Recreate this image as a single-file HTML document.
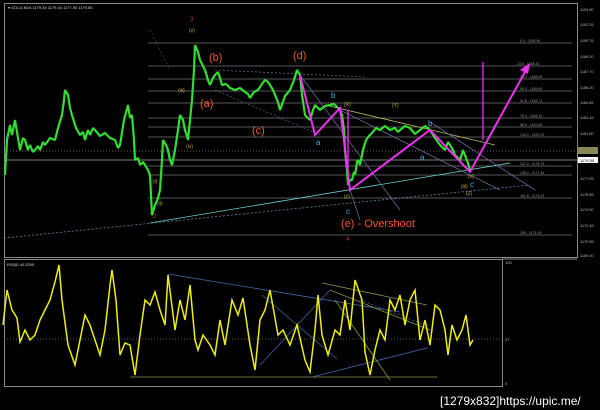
<!DOCTYPE html>
<html><head><meta charset="utf-8"><style>
html,body{margin:0;padding:0;background:#000;width:600px;height:410px;overflow:hidden}
svg{display:block}
text{font-family:"Liberation Sans",sans-serif}
</style></head><body>
<svg width="600" height="410" viewBox="0 0 600 410">
<rect width="600" height="410" fill="#000"/>
<rect x="4.5" y="3.5" width="573" height="254" fill="none" stroke="#888" stroke-width="1"/>
<rect x="4.5" y="259.5" width="498" height="127" fill="none" stroke="#888" stroke-width="1"/>
<line x1="502" y1="259" x2="577" y2="259" stroke="#888"/>
<text x="8" y="9" font-size="4" fill="#ddd">▾ GOLD,M15  1179.34 1179.44 1177.95 1179.55</text>
<g stroke="#777" stroke-width="0.7">
<line x1="148" y1="43" x2="572" y2="43"/><line x1="148" y1="66" x2="572" y2="66"/>
<line x1="148" y1="79" x2="572" y2="79"/><line x1="148" y1="91" x2="572" y2="91"/>
<line x1="148" y1="103" x2="572" y2="103"/><line x1="148" y1="118" x2="572" y2="118"/>
<line x1="148" y1="127" x2="572" y2="127"/><line x1="148" y1="137" x2="572" y2="137"/>
<line x1="148" y1="166" x2="572" y2="166"/><line x1="148" y1="175" x2="572" y2="175"/>
<line x1="148" y1="198" x2="572" y2="198"/><line x1="148" y1="235" x2="572" y2="235"/>
<line x1="4" y1="160" x2="577" y2="160" stroke="#aaa"/>
</g>
<line x1="4" y1="151" x2="577" y2="151" stroke="#887" stroke-dasharray="1,2" stroke-width="0.7"/>
<g font-size="3.5" fill="#999">
<text x="520" y="42">0.0 - 1190.90</text><text x="517" y="65">23.6 - 1188.33</text>
<text x="520" y="78">38.2 - 1186.95</text><text x="520" y="90">50.0 - 1185.65</text>
<text x="520" y="102">61.8 - 1184.71</text><text x="520" y="117">76.4 - 1183.12</text>
<text x="520" y="126">88.6 - 1181.86</text><text x="520" y="136">100.0 - 1181.00</text>
<text x="520" y="165">127.2 - 1178.76</text><text x="520" y="174">138.2 - 1177.46</text>
<text x="520" y="197">161.8 - 1175.23</text><text x="520" y="234">200 - 1171.00</text>
</g>
<g stroke-width="0.8" fill="none">
<line x1="150" y1="223" x2="510" y2="163" stroke="#6cc"/>
<line x1="4" y1="238" x2="530" y2="185" stroke="#58a" stroke-dasharray="2,2"/>
<line x1="215" y1="70" x2="365" y2="77" stroke="#668" stroke-dasharray="2,2"/>
<line x1="215" y1="90" x2="320" y2="135" stroke="#558" stroke-dasharray="2,2"/>
<line x1="325" y1="105" x2="495" y2="145" stroke="#bb6"/>
<line x1="300" y1="75" x2="400" y2="210" stroke="#669"/>
<line x1="340" y1="110" x2="500" y2="190" stroke="#669"/>
<line x1="350" y1="190" x2="360" y2="220" stroke="#669"/>
<line x1="430" y1="122" x2="535" y2="190" stroke="#669"/>
<line x1="150" y1="30" x2="170" y2="70" stroke="#444" stroke-dasharray="2,2"/>
</g>
<polyline fill="none" stroke="#3d3" stroke-width="2.2" stroke-linejoin="bevel" points="5,175 7,140 10,125 12,135 15,120 17,132 20,150 23,138 25,140 28,150 30,145 33,152 35,150 38,146 40,150 43,142 45,145 50,138 55,140 58,128 62,115 64,100 65,90 68,95 70,108 72,115 76,128 80,135 83,132 85,140 88,130 90,135 93,128 95,130 100,136 105,133 110,138 115,140 118,148 120,145 124,120 128,105 130,118 132,115 134,140 135,160 138,158 140,165 143,162 145,165 148,170 150,175 152,215 155,205 158,198 160,190 162,160 163,140 166,145 168,150 170,160 172,165 174,155 175,150 178,130 180,115 183,120 185,130 187,136 188,140 190,120 192,100 194,70 195,45 198,52 200,60 203,66 205,70 208,80 210,85 213,78 215,75 218,72 220,78 222,85 226,84 230,88 235,90 240,88 245,92 248,94 250,98 254,92 258,90 262,84 265,80 268,82 270,85 273,90 275,95 278,102 280,110 285,96 290,90 294,80 297,70 300,75 302,95 305,115 308,118 310,120 313,110 315,105 318,108 320,110 325,106 330,105 334,104 337,107 340,110 342,115 344,130 345,150 347,170 348,185 350,180 352,180 354,172 355,175 357,162 358,160 360,165 363,150 366,140 369,136 372,133 376,128 380,130 385,126 390,130 395,128 398,132 400,130 405,126 410,128 415,134 420,130 425,126 430,130 435,138 440,145 443,148 445,150 448,142 450,145 453,150 455,155 458,158 460,160 462,154 463,150 466,158 468,163 470,170"/>
<g stroke="#e3e" stroke-width="2" fill="none">
<polyline points="300,75 315,135 340,108 350,190 430,130 470,172 526,70"/>
<line x1="483" y1="62" x2="483" y2="140" stroke-width="1.3"/>
<line x1="348" y1="110" x2="348" y2="185" stroke-width="1.3"/>
</g>
<polygon points="530,63 520,70 528,74" fill="#e3e"/>
<g font-size="11" fill="#e53">
<text x="209" y="61">(b)</text><text x="293" y="59">(d)</text>
<text x="200" y="107">(a)</text><text x="252" y="134">(c)</text>
<text x="341" y="227">(e) - Overshoot</text>
</g>
<g font-size="8" fill="#4ad">
<text x="331" y="98">b</text><text x="316" y="145">a</text><text x="346" y="214">c</text>
<text x="428" y="126">b</text><text x="420" y="160">a</text><text x="470" y="187">c</text>
</g>
<g font-size="5" fill="#ca3">
<text x="189" y="32">(v)</text><text x="178" y="92">(iii)</text><text x="186" y="148">(iv)</text>
<text x="153" y="183">(i)</text><text x="157" y="205">(ii)</text><text x="392" y="107">(Y)</text>
<text x="344" y="106">(X)</text><text x="344" y="198">(z)</text><text x="466" y="195">(Z)</text>
<text x="461" y="188">(iii)</text><text x="468" y="178">(v)</text>
</g>
<text x="190" y="21" font-size="6" fill="#c33">3</text>
<text x="153" y="218" font-size="6" fill="#c33">2</text>
<text x="346" y="241" font-size="6" fill="#c33">4</text>
<g font-size="3.8" fill="#bbb">
<text x="580" y="11">1193.80</text><text x="580" y="26">1192.25</text><text x="580" y="42">1190.75</text>
<text x="580" y="58">1189.20</text><text x="580" y="73">1187.70</text><text x="580" y="89">1186.20</text>
<text x="580" y="104">1184.65</text><text x="580" y="119">1183.15</text><text x="580" y="135">1181.60</text>
<text x="580" y="180">1177.05</text><text x="580" y="196">1175.55</text><text x="580" y="211">1174.00</text>
<text x="580" y="227">1172.45</text><text x="580" y="243">1170.95</text><text x="580" y="257">1169.40</text>
</g>
<rect x="578" y="147" width="20" height="7" fill="#885"/>
<rect x="578" y="157" width="20" height="6" fill="#fff"/>
<text x="580" y="162" font-size="4" fill="#000">1179.55</text>
<text x="7" y="266" font-size="4" fill="#ddd">RSI(5) 40.3295</text>
<line x1="4" y1="339" x2="502" y2="339" stroke="#777" stroke-dasharray="1,2" stroke-width="0.7"/>
<g font-size="4" fill="#bbb"><text x="505" y="264">100</text><text x="505" y="341">37</text><text x="505" y="385">0</text></g>
<g stroke-width="0.8" fill="none">
<line x1="168" y1="274" x2="400" y2="312" stroke="#46a"/>
<line x1="130" y1="377" x2="437" y2="377" stroke="#894"/>
<line x1="312" y1="377" x2="427" y2="348" stroke="#46a"/>
<line x1="322" y1="283" x2="427" y2="305" stroke="#894"/>
<line x1="330" y1="290" x2="430" y2="330" stroke="#894"/>
<line x1="335" y1="300" x2="390" y2="380" stroke="#894"/>
<line x1="262" y1="295" x2="337" y2="359" stroke="#46a"/>
<line x1="260" y1="365" x2="330" y2="290" stroke="#46a"/>
<line x1="360" y1="300" x2="428" y2="326" stroke="#46a" stroke-dasharray="2,2"/>
</g>
<polyline fill="none" stroke="#ee1" stroke-width="1.5" points="3,325 7,290 12,310 17,318 20,342 25,330 30,340 35,335 40,320 45,310 50,300 55,282 59,265 62,300 68,345 75,365 80,340 85,315 90,325 95,340 100,355 105,330 110,285 112,270 116,300 120,355 125,343 130,345 135,375 140,335 145,300 150,305 155,292 160,310 165,325 168,275 175,330 180,300 185,320 190,285 195,340 198,350 203,335 210,345 215,355 220,320 225,345 232,300 238,315 243,298 250,345 255,370 260,320 265,310 270,290 278,335 283,330 290,345 297,325 305,360 310,372 315,330 318,295 322,335 328,355 335,330 340,335 345,300 350,330 355,280 362,300 365,352 370,375 375,350 380,330 385,340 390,300 395,310 400,295 405,325 410,300 415,290 420,340 425,320 430,345 435,305 440,310 445,330 448,355 452,325 457,340 462,330 466,315 470,345 473,340"/>
<text x="440" y="405" font-size="12" fill="#fff" font-family="Liberation Mono,monospace">[1279x832]https://upic.me/</text>
</svg>
</body></html>
